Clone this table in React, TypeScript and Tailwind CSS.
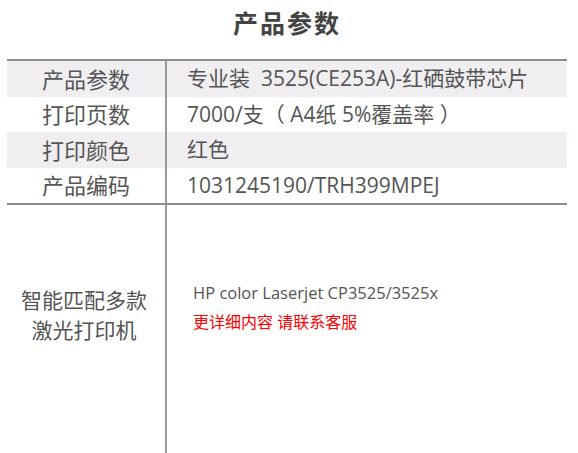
const rows = [
  { label: '产品参数', value: '专业装  3525(CE253A)-红硒鼓带芯片', shaded: true },
  { label: '打印页数', value: '7000/支（ A4纸 5%覆盖率 ）', shaded: false },
  { label: '打印颜色', value: '红色', shaded: true },
  { label: '产品编码', value: '1031245190/TRH399MPEJ', shaded: false },
]

const font = { fontFamily: '"Open Sans", "Noto Sans CJK SC", sans-serif' }

export default function App() {
  return (
    <div className="h-[453px] w-[578px] overflow-hidden bg-white text-[#555]" style={font}>
      <h1 className="flex h-[59px] items-start justify-center pt-[5px] pr-[4px] text-[25px] font-bold tracking-[2px] text-[#444]">
        产品参数
      </h1>

      <div className="ml-[7px] w-[560px] border-t-2 border-[#8c8c8c]">
        {rows.map((row, i) => (
          <div
            key={row.label}
            className={`flex ${i % 2 === 0 ? 'h-[36px]' : 'h-[35px]'} ${row.shaded ? 'bg-[#f0eef1]' : 'bg-white'}`}
          >
            <div className="flex w-[160px] items-center justify-center border-r-2 border-[#9a9a9a] text-[22px]">
              {row.label}
            </div>
            <div className="flex flex-1 items-center whitespace-pre pl-[20px] text-[21px]">{row.value}</div>
          </div>
        ))}

        <div className="flex h-[260px] border-t-2 border-[#8c8c8c]">
          <div className="flex w-[160px] flex-col items-center border-r-2 border-[#9a9a9a] pt-[80px] pr-[4px] text-[21px] leading-[30px]">
            <span>智能匹配多款</span>
            <span>激光打印机</span>
          </div>
          <div className="flex flex-1 flex-col pl-[26px] pt-[75px]">
            <span className="text-[16.5px] leading-[26px]">HP color Laserjet CP3525/3525x</span>
            <span className="pt-[2px] text-[16px] leading-[28px] text-[#ff0000]">更详细内容 请联系客服</span>
          </div>
        </div>
      </div>
    </div>
  )
}
